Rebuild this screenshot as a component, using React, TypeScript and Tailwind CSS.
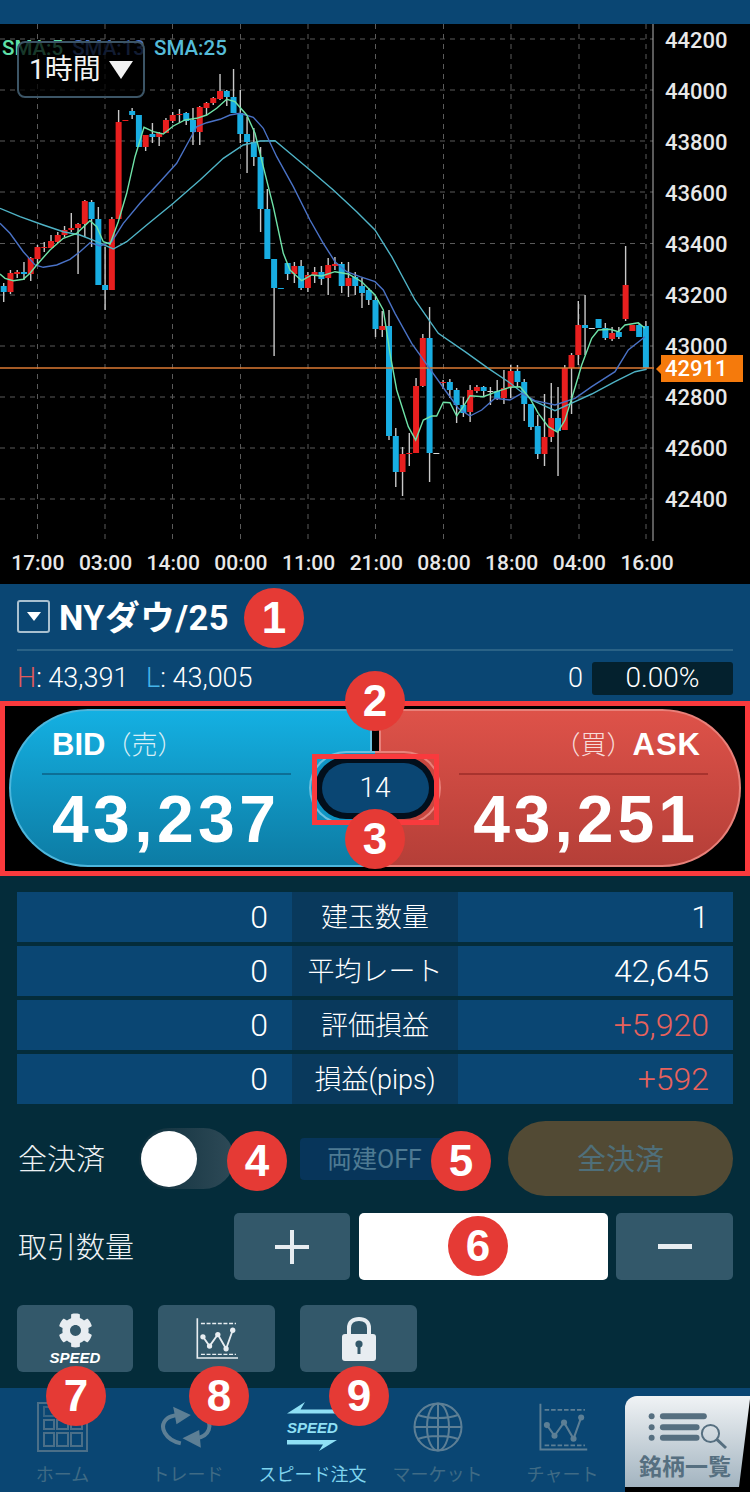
import { FaCog } from "react-icons/fa";

type Candle = [number, number, number, number, "b" | "r" | "w"];

// body top, body bottom, wick top, wick bottom, colour — spaced 6.76px from x=3.7
const candles: Candle[] = [
  [286, 292, 283, 302, "b"], [273, 292, 270, 294, "r"], [272, 274, 270, 278, "r"], [272, 274, 262, 280, "b"],
  [258, 274, 257, 281, "r"], [247, 259, 245, 265, "r"], [247, 248, 242, 252, "r"], [241, 248, 235, 248, "r"],
  [235, 242, 232, 243, "r"], [230, 235, 226, 237, "r"], [228, 230, 213, 232, "r"], [224, 228, 223, 274, "r"],
  [201, 224, 200, 237, "r"], [202, 219, 200, 247, "b"], [219, 285, 207, 285, "b"], [285, 290, 247, 310, "b"],
  [219, 290, 217, 290, "r"], [122, 219, 110, 219, "r"], [120, 121, 120, 121, "r"], [111, 115, 108, 119, "b"],
  [115, 147, 115, 147, "b"], [135, 147, 135, 151, "r"], [134, 137, 123, 143, "b"], [133, 137, 132, 146, "r"],
  [120, 133, 118, 133, "r"], [115, 121, 112, 123, "r"], [114, 115, 109, 123, "r"], [113, 121, 112, 125, "b"],
  [120, 132, 108, 145, "b"], [107, 132, 106, 145, "r"], [103, 108, 102, 115, "r"], [98, 103, 97, 105, "r"],
  [91, 99, 74, 100, "r"], [91, 97, 90, 106, "b"], [97, 113, 69, 113, "b"], [113, 134, 90, 143, "b"],
  [134, 142, 117, 173, "b"], [142, 157, 128, 166, "b"], [157, 209, 147, 232, "b"], [209, 259, 189, 259, "b"],
  [259, 288, 259, 356, "b"], [288, 289, 288, 289, "b"], [263, 274, 263, 280, "b"], [266, 274, 262, 283, "r"],
  [266, 288, 260, 290, "b"], [275, 288, 272, 292, "r"], [272, 275, 267, 283, "r"], [272, 279, 266, 285, "b"],
  [265, 278, 258, 295, "r"], [264, 266, 257, 270, "r"], [264, 286, 262, 293, "b"], [278, 286, 262, 297, "r"],
  [277, 286, 272, 295, "b"], [286, 293, 278, 308, "b"], [290, 300, 288, 305, "b"], [300, 329, 296, 337, "b"],
  [326, 330, 311, 337, "r"], [326, 436, 310, 440, "b"], [436, 472, 428, 487, "b"], [454, 472, 447, 496, "r"],
  [453, 454, 433, 466, "r"], [386, 453, 378, 453, "r"], [338, 386, 334, 387, "r"], [338, 453, 307, 482, "b"],
  [453, 454, 453, 454, "w"], [382, 383, 380, 389, "r"], [382, 390, 379, 398, "b"], [390, 405, 388, 423, "b"],
  [405, 413, 397, 417, "b"], [390, 412, 385, 422, "r"], [387, 391, 385, 393, "r"], [387, 391, 386, 396, "b"],
  [391, 392, 387, 405, "w"], [391, 399, 380, 400, "b"], [388, 398, 370, 404, "r"], [371, 387, 365, 398, "r"],
  [371, 382, 365, 387, "b"], [382, 404, 379, 421, "b"], [404, 427, 404, 430, "b"], [426, 454, 415, 459, "b"],
  [437, 454, 394, 466, "r"], [418, 437, 383, 442, "r"], [418, 431, 387, 476, "b"], [368, 430, 365, 430, "r"],
  [355, 368, 353, 414, "r"], [325, 355, 301, 365, "r"], [325, 328, 295, 355, "b"], [328, 329, 328, 329, "w"],
  [319, 328, 319, 328, "b"], [328, 338, 323, 340, "b"], [333, 339, 327, 341, "r"], [332, 337, 327, 339, "b"],
  [285, 319, 246, 321, "r"], [325, 331, 325, 331, "r"], [325, 337, 323, 337, "b"], [326, 368, 321, 368, "b"],
];

const candleColors = { b: "#18ade2", r: "#e81f1f", w: "#d8d8d8" };

const left = (pts: number[][]) => pts.map(([x, y]) => `${(x / 3).toFixed(1)},${(y / 3).toFixed(1)}`);
const right = (pts: number[][]) => pts.map(([x, y]) => `${(375 + x / 3).toFixed(1)},${(230 + y / 3).toFixed(1)}`);

const sma5 = [
  ...left([[0, 822], [15, 835], [40, 842], [70, 838], [90, 820], [110, 795], [150, 750], [190, 715], [230, 700], [270, 662], [290, 680], [310, 725], [330, 732], [355, 665], [380, 580], [405, 470], [432, 382], [460, 395], [490, 402], [520, 378], [555, 360], [590, 355], [620, 345], [650, 325], [680, 298], [705, 305], [740, 345], [765, 400], [790, 500], [820, 620], [850, 760], [870, 810], [905, 842], [935, 825], [965, 828], [1005, 815], [1045, 822], [1085, 845]]),
  ...right([[0, 195], [25, 240], [45, 370], [65, 480], [100, 590], [122, 630], [145, 570], [170, 558], [185, 558], [205, 517], [225, 518], [245, 558], [265, 530], [285, 497], [325, 500], [365, 485], [405, 472], [435, 470], [465, 505], [490, 550], [520, 590], [548, 607], [570, 570], [595, 490], [620, 405], [650, 325], [670, 300], [705, 298], [730, 305], [750, 285], [790, 278], [810, 295]]),
].join(" ");

const sma13 = [
  ...left([[0, 670], [30, 700], [70, 755], [105, 795], [130, 802], [170, 795], [210, 778], [240, 755], [270, 728], [300, 738], [335, 725], [370, 670], [420, 610], [480, 545], [530, 490], [560, 435], [590, 380], [620, 368], [660, 358], [690, 345], [720, 340], [760, 352], [790, 385], [830, 470], [880, 560], [930, 660], [970, 730], [1005, 785], [1040, 815], [1080, 830]]),
  ...right([[0, 155], [25, 180], [60, 250], [110, 340], [160, 410], [210, 480], [250, 535], [285, 558], [320, 540], [360, 505], [405, 510], [440, 490], [480, 512], [540, 525], [600, 505], [650, 470], [720, 425], [760, 360], [810, 320]]),
].join(" ");

const sma25 = [
  ...left([[0, 625], [60, 650], [130, 675], [190, 695], [240, 705], [290, 725], [340, 747], [380, 725], [440, 675], [520, 610], [600, 540], [670, 475], [730, 435], [780, 423], [825, 422], [870, 460], [930, 510], [1000, 570], [1070, 635]]),
  ...right([[0, 0], [50, 80], [120, 210], [190, 310], [270, 365], [340, 415], [400, 455], [470, 510], [540, 542], [600, 515], [650, 492], [720, 455], [780, 425], [815, 418]]),
].join(" ");

const gridX = [37.5, 105, 172.5, 240.5, 308, 375.5, 443.5, 511, 579, 646];
const gridY = [39, 90, 141, 192, 243.5, 295, 346, 397, 448, 499];
const prices = ["44200", "44000", "43800", "43600", "43400", "43200", "43000", "42800", "42600", "42400"];
const times = ["17:00", "03:00", "14:00", "00:00", "11:00", "21:00", "08:00", "18:00", "04:00", "16:00"];

const rows = [
  { left: "0", label: "建玉数量", right: "1", loss: false },
  { left: "0", label: "平均レート", right: "42,645", loss: false },
  { left: "0", label: "評価損益", right: "+5,920", loss: true },
  { left: "0", label: "損益(pips)", right: "+592", loss: true },
];

const badges = [
  { n: 1, className: "left-[244px] top-[588px]" },
  { n: 2, className: "left-[345px] top-[671px]" },
  { n: 3, className: "left-[345px] top-[809px]" },
  { n: 4, className: "left-[227px] top-[1131px]" },
  { n: 5, className: "left-[431px] top-[1131px]" },
  { n: 6, className: "left-[448px] top-[1216px]" },
  { n: 7, className: "left-[46px] top-[1366px]" },
  { n: 8, className: "left-[189px] top-[1366px]" },
  { n: 9, className: "left-[329px] top-[1366px]" },
];

const Chart = () => (
  <svg width="654" height="520" viewBox="0 24 654 520" className="block shrink-0">
    {gridX.map((x) => (
      <line key={x} x1={x} x2={x} y1={24} y2={544} stroke="#5a5a5a" strokeWidth="1" strokeDasharray="5 5" />
    ))}
    {gridY.map((y) => (
      <line key={y} x1={0} x2={653} y1={y} y2={y} stroke="#5a5a5a" strokeWidth="1" strokeDasharray="5 5" />
    ))}
    <line x1={653} x2={653} y1={24} y2={541} stroke="#b4b4b4" strokeWidth="1" />
    {candles.map(([top, bottom, wickTop, wickBottom, color], i) => {
      const x = 3.7 + i * 6.76;
      return (
        <g key={i}>
          <line x1={x} x2={x} y1={wickTop} y2={wickBottom} stroke="#c9c9c9" strokeWidth="1.4" />
          <rect x={x - 3} y={top} width="6" height={bottom - top} fill={candleColors[color]} />
        </g>
      );
    })}
    <line x1={0} x2={654} y1={368} y2={368} stroke="#dd7a33" strokeWidth="1.4" />
    <polyline points={sma25} fill="none" stroke="#4fb3c6" strokeWidth="1.4" />
    <polyline points={sma13} fill="none" stroke="#4a72c6" strokeWidth="1.4" />
    <polyline points={sma5} fill="none" stroke="#6fe3a8" strokeWidth="1.4" />
  </svg>
);

const LineChartIcon = ({ color, className }: { color: string; className: string }) => (
  <svg viewBox="132 32 134 130" className={className} fill="none" stroke={color}>
    <path d="M141 36V156H264" strokeWidth="5" />
    <path d="M152 52H258M152 145H258" strokeWidth="4.5" strokeDasharray="12 5" />
    <path d="M158 92L178 120L203 85L228 128L248 72" strokeWidth="5.5" />
    <g fill={color} stroke="none">
      <circle cx="158" cy="92" r="8" />
      <circle cx="178" cy="120" r="8" />
      <circle cx="203" cy="85" r="8" />
      <circle cx="228" cy="128" r="8" />
      <circle cx="248" cy="72" r="8" />
    </g>
  </svg>
);

const HomeIcon = () => (
  <svg viewBox="0 0 51 50" className="h-[50px] w-[51px]" fill="none" stroke="#4b6f88" strokeWidth="2">
    <rect x="1" y="1" width="49" height="48" />
    <path d="M7 5H17V14H7ZM20 5H31V14H20ZM34 5H45V14H34Z" opacity="0.7" />
    <path d="M7 18H17V27H7ZM20 18H31V27H20ZM34 18H45V27H34Z" />
    <path d="M7 31H17V44H7ZM20 31H31V44H20ZM34 31H45V44H34Z" />
  </svg>
);

const SyncIcon = () => (
  <svg viewBox="30 30 170 135" className="h-[45px] w-[57px]" fill="#5d7f95">
    <path d="M95 145C50 135 25 95 55 70C62 64 70 62 85 60" fill="none" stroke="#5d7f95" strokeWidth="12" />
    <path d="M72 35L125 60L82 88Z" />
    <path d="M165 60C195 90 180 125 140 130" fill="none" stroke="#5d7f95" strokeWidth="12" />
    <path d="M100 130L150 105L155 158Z" />
  </svg>
);

const SpeedIcon = () => (
  <div className="flex h-[50px] w-[51px] flex-col items-center justify-between text-[#8fe0f5]">
    <svg viewBox="0 0 51 12" className="h-[12px] w-[51px]" fill="#8fe0f5">
      <path d="M0 11.5L18 0L13.5 7.5H51V11.5Z" />
    </svg>
    <span className="font-['Liberation_Sans',sans-serif] text-[15px] leading-none font-bold italic">SPEED</span>
    <svg viewBox="0 0 51 12" className="h-[12px] w-[51px]" fill="#8fe0f5">
      <path d="M0 0H50L32 11L36 4.5H0Z" />
    </svg>
  </div>
);

const GlobeIcon = () => (
  <svg viewBox="0 0 50 50" className="h-[50px] w-[50px]" fill="none" stroke="#5d7f95" strokeWidth="2">
    <circle cx="25" cy="25" r="23.5" />
    <ellipse cx="25" cy="25" rx="11" ry="23.5" />
    <path d="M25 1.5V48.5M1.5 25H48.5M5 13C15 17 35 17 45 13M5 37C15 33 35 33 45 37" />
  </svg>
);

const ListSearchIcon = () => (
  <svg viewBox="95 65 240 115" className="h-[38px] w-[80px]" fill="#566f80">
    <circle cx="105" cy="78" r="9" />
    <circle cx="105" cy="111" r="9" />
    <circle cx="105" cy="143" r="9" />
    <rect x="130" y="69" width="142" height="18" rx="9" />
    <rect x="130" y="102" width="120" height="18" rx="9" />
    <rect x="130" y="134" width="120" height="18" rx="9" />
    <circle cx="283" cy="130" r="26" fill="none" stroke="#566f80" strokeWidth="6" />
    <path d="M302 148L330 174" stroke="#566f80" strokeWidth="9" />
  </svg>
);

const LockIcon = () => (
  <svg viewBox="0 0 34 44" className="h-[44px] w-[34px]">
    <path d="M7 20V11C7 5 11 2 17 2C23 2 27 5 27 11V20" fill="none" stroke="#e8edf1" strokeWidth="4" />
    <rect x="0" y="17" width="34" height="27" rx="3" fill="#e8edf1" />
    <circle cx="17" cy="27" r="3.6" fill="#33586a" />
    <rect x="15.5" y="28" width="3" height="9" fill="#33586a" />
  </svg>
);

const navItems = [
  { label: "ホーム", icon: <HomeIcon />, active: false },
  { label: "トレード", icon: <SyncIcon />, active: false },
  { label: "スピード注文", icon: <SpeedIcon />, active: true },
  { label: "マーケット", icon: <GlobeIcon />, active: false },
  { label: "チャート", icon: <LineChartIcon color="#5d7f95" className="h-[50px] w-[51px]" />, active: false },
];

const App = () => {
  return (
    <div className="relative flex h-[1492px] w-[750px] flex-col overflow-hidden bg-[#042c3a] font-['Roboto','Noto_Sans_CJK_JP',sans-serif] text-white">
      <div className="h-[24px] shrink-0 bg-[#0a4673]" />

      <div className="relative h-[560px] shrink-0 bg-black">
        <div className="flex h-[520px]">
          <Chart />
          <div className="-mt-[9.5px] pl-[11px]">
            {prices.map((p) => (
              <div key={p} className="flex h-[51.1px] items-center text-[22px] font-medium text-[#e8e8e8]">
                {p}
              </div>
            ))}
          </div>
        </div>
        <div className="flex h-[40px] pl-[4px]">
          {times.map((t) => (
            <div key={t} className="flex w-[67.7px] items-center justify-center text-[21px] font-medium text-[#e8e8e8]">
              {t}
            </div>
          ))}
        </div>

        <div className="absolute top-[11px] left-[2px] flex gap-[9px] text-[20.5px] leading-[26px] font-medium">
          <span className="text-[#5fe0a8]">SMA:5</span>
          <span className="text-[#4a72c6]">SMA:13</span>
          <span className="text-[#55bcd8]">SMA:25</span>
        </div>
        <div className="absolute top-[17px] left-[17px] flex h-[57px] w-[128px] items-center gap-[8px] rounded-[8px] border-2 border-[#3c5566] bg-black/75 pl-[10px] text-[28px] text-[#f2f2f2]">
          1時間
          <span className="h-0 w-0 border-x-[12px] border-t-[18px] border-x-transparent border-t-[#f2f2f2]" />
        </div>
        <div className="absolute top-[331px] left-[661px] flex h-[27px] w-[82px] items-center bg-[#f57a0c] pl-[4px] text-[22px] leading-[27px] font-medium text-white">
          42911
          <span className="absolute top-[9px] -left-[5px] h-0 w-0 border-y-[5px] border-r-[5px] border-y-transparent border-r-[#f57a0c]" />
        </div>
      </div>

      <div className="h-[117px] shrink-0 bg-[#0a4673] px-[17px]">
        <div className="flex h-[67px] items-center gap-[9px] border-b-2 border-[#2a6286]">
          <span className="flex h-[33px] w-[33px] items-center justify-center rounded-[3px] border-2 border-[#a9c0cf]">
            <span className="h-0 w-0 border-x-[7px] border-t-[9px] border-x-transparent border-t-white" />
          </span>
          <span className="pt-[4px] text-[34.5px] font-bold tracking-[0.5px]">NYダウ/25</span>
        </div>
        <div className="flex h-[49px] items-center pt-[5px] text-[27px] font-light">
          <span className="w-[129px]">
            <span className="text-[#e25a5a]">H</span>: 43,391
          </span>
          <span>
            <span className="text-[#45b5ea]">L</span>: 43,005
          </span>
          <span className="ml-auto">0</span>
          <span className="ml-[9px] flex h-[33px] w-[141px] items-center justify-center rounded-[3px] bg-[#04212e] text-[28px]">
            0.00%
          </span>
        </div>
      </div>

      <div className="relative flex h-[175px] shrink-0 items-start border-[5px] border-[#f93a3d] bg-black pt-[3px] pl-[4px]">
        <div className="h-[158px] w-[366px] rounded-l-[79px] border-2 border-r-0 border-[#4db6dc] bg-gradient-to-b from-[#14b0e2] to-[#0d7ca4] pt-[18px] pr-[84px] pl-[31px]">
          <div className="flex h-[46px] items-center border-b-2 border-[#0d6f96] pb-[12px] pl-[10px]">
            <span className="font-['Liberation_Sans',sans-serif] text-[31px] font-bold">BID</span>
            <span className="text-[26px] font-light text-[#d8eef6]">（売）</span>
          </div>
          <div className="mt-[6px] pl-[10px] font-['Liberation_Sans',sans-serif] text-[66px] leading-[76px] font-bold tracking-[4.4px]">
            43,237
          </div>
        </div>
        <div className="h-[158px] w-[366px] rounded-r-[79px] border-2 border-l-0 border-[#e8817a] bg-gradient-to-b from-[#de5249] to-[#b53f38] pt-[18px] pr-[31px] pl-[84px]">
          <div className="flex h-[46px] items-center justify-end border-b-2 border-[#a8332e] pr-[7px] pb-[12px]">
            <span className="text-[26px] font-light text-[#f7dcd9]">（買）</span>
            <span className="font-['Liberation_Sans',sans-serif] text-[31px] font-bold tracking-[1px]">ASK</span>
          </div>
          <div className="mt-[6px] pr-[9px] text-right font-['Liberation_Sans',sans-serif] text-[66px] leading-[76px] font-bold tracking-[4px]">
            43,251
          </div>
        </div>

        <span className="absolute top-[3px] left-[365px] h-[44px] w-[11px] border-x-2 border-x-[#6cc0df] border-r-[#e8817a] bg-black" />
        <div className="absolute top-[45px] left-[304px] flex h-[74px] w-[132px]">
          <span className="h-full w-1/2 rounded-l-[37px] border-2 border-r-0 border-[#6cc0df] bg-[#0f95c4]" />
          <span className="h-full w-1/2 rounded-r-[37px] border-2 border-l-0 border-[#e8817a] bg-[#c9473f]" />
        </div>
        <div className="absolute top-[51px] left-[310px] flex h-[62px] w-[120px] items-center justify-center rounded-[31px] bg-[#020f1c]">
          <span className="flex h-[50px] w-[107px] items-center justify-center rounded-[25px] bg-[#0a4673] text-[28px] font-light">
            14
          </span>
        </div>
        <span className="absolute top-[48px] left-[307px] h-[71px] w-[127px] border-[5px] border-[#f93a3d]" />
      </div>

      <div className="flex-1 px-[17px] pt-[16px]">
        <div className="flex flex-col gap-[4px]">
          {rows.map((r) => (
            <div key={r.label} className="flex h-[50px] text-[32px] font-light">
              <span className="flex w-[275px] items-center justify-end bg-[#0a4673] pr-[24px]">{r.left}</span>
              <span className="flex w-[166px] items-center justify-center bg-[#09395c] pt-[2px] text-[27px]">
                {r.label}
              </span>
              <span
                className={`flex w-[275px] items-center justify-end bg-[#0a4673] pr-[24px] ${r.loss ? "text-[#e8625c]" : ""}`}
              >
                {r.right}
              </span>
            </div>
          ))}
        </div>

        <div className="mt-[17px] flex h-[75px] items-center">
          <span className="w-[122px] pt-[5px] pl-px text-[29px] font-light text-[#eef2f4]">全決済</span>
          <div className="flex h-[61px] w-[95px] items-center rounded-full bg-gradient-to-r from-[#0d2f3c] to-[#2e4a57] pl-[2px]">
            <span className="h-[56px] w-[56px] rounded-full bg-white" />
          </div>
          <div className="ml-[66px] flex h-[42px] w-[150px] items-center rounded-[4px] bg-[#07355a] pt-[2px] pl-[27px] text-[25px] text-[#4e7a92]">
            両建OFF
          </div>
          <div className="ml-auto flex h-[75px] w-[225px] items-center justify-center rounded-full bg-[#524a34] pt-[4px] text-[29px] text-[#4f6f7a]">
            全決済
          </div>
        </div>

        <div className="mt-[17px] flex h-[67px] items-center">
          <span className="w-[217px] pt-[5px] pl-px text-[29px] font-light text-[#eef2f4]">取引数量</span>
          <div className="flex h-[67px] w-[116px] items-center justify-center rounded-[5px] bg-[#33586a]">
            <svg width="34" height="34" viewBox="0 0 34 34" stroke="#e8edf1" strokeWidth="4">
              <path d="M17 0V34M0 17H34" />
            </svg>
          </div>
          <div className="ml-[9px] h-[67px] w-[250px] rounded-[5px] bg-white" />
          <div className="ml-[8px] flex h-[67px] w-[117px] items-center justify-center rounded-[5px] bg-[#33586a]">
            <span className="h-[5px] w-[34px] bg-[#e8edf1]" />
          </div>
        </div>

        <div className="mt-[25px] flex gap-[25px]">
          <div className="flex h-[67px] w-[116px] flex-col items-center justify-center rounded-[6px] bg-[#33586a]">
            <FaCog className="h-[35px] w-[35px] text-[#e8edf1]" />
            <span className="mt-[3px] font-['Liberation_Sans',sans-serif] text-[15px] leading-[14px] font-bold italic">
              SPEED
            </span>
          </div>
          <div className="flex h-[67px] w-[117px] items-center justify-center rounded-[6px] bg-[#33586a]">
            <LineChartIcon color="#e8edf1" className="h-[43px] w-[45px]" />
          </div>
          <div className="flex h-[67px] w-[117px] items-center justify-center rounded-[6px] bg-[#33586a]">
            <LockIcon />
          </div>
        </div>
      </div>

      <div className="flex h-[104px] shrink-0 bg-[#0a4673]">
        {navItems.map((item) => (
          <div key={item.label} className="flex w-[125px] flex-col items-center pt-[14px]">
            <div className="flex h-[50px] items-center">{item.icon}</div>
            <span
              className={`mt-[11px] text-[18px] leading-[24px] ${item.active ? "text-[#7fd4ee]" : "text-[#3f6b85]"}`}
            >
              {item.label}
            </span>
          </div>
        ))}
        <div className="mt-[8px] flex w-[125px] flex-col">
          <div className="relative flex h-[91px] flex-col items-center overflow-hidden rounded-tl-[12px] bg-gradient-to-b from-[#f0f3f5] to-[#a3b4c0] pt-[16px]">
            <ListSearchIcon />
            <span className="mt-[4px] pr-[5px] text-[23px] leading-[28px] font-bold text-[#566f80]">銘柄一覧</span>
            <span className="absolute right-0 bottom-0 h-0 w-0 border-b-[88px] border-l-[11px] border-b-black border-l-transparent" />
          </div>
          <div className="h-[5px] bg-black" />
        </div>
      </div>

      {badges.map((b) => (
        <span
          key={b.n}
          className={`absolute flex h-[60px] w-[60px] items-center justify-center rounded-full bg-[#e53a35] font-['Liberation_Sans',sans-serif] text-[44px] font-bold text-white ${b.className}`}
        >
          {b.n}
        </span>
      ))}
    </div>
  );
};

export default App;
